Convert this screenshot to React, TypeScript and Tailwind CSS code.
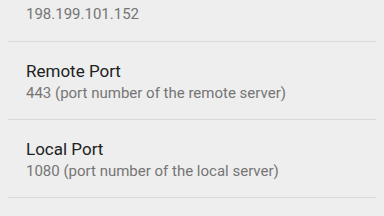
import React from "react";

const rows = [
  { title: "Remote Port", summary: "443 (port number of the remote server)" },
  { title: "Local Port", summary: "1080 (port number of the local server)" },
];

function Divider() {
  return <div className="mx-2 h-px bg-[#d9d9d9]" />;
}

export default function App() {
  return (
    <div
      className="w-[384px] h-[216px] overflow-hidden bg-[#eeeeee]"
      style={{ fontFamily: "Roboto, 'Noto Sans', sans-serif" }}
    >
      {/* tail of the previous preference (server address) */}
      <div className="pl-[26px] pt-[3.9px] pb-[16.8px] text-[15px] leading-[20px] text-[#757575]">
        198.199.101.152
      </div>
      <Divider />

      {rows.map((row) => (
        <div key={row.title}>
          <div className="pl-[26px] pt-[18.2px] pb-[15.9px]">
            <div className="text-[17px] leading-[22px] text-[#212121]">{row.title}</div>
            <div className="mt-[1.2px] text-[15px] leading-[20px] text-[#757575]">{row.summary}</div>
          </div>
          <Divider />
        </div>
      ))}
    </div>
  );
}
